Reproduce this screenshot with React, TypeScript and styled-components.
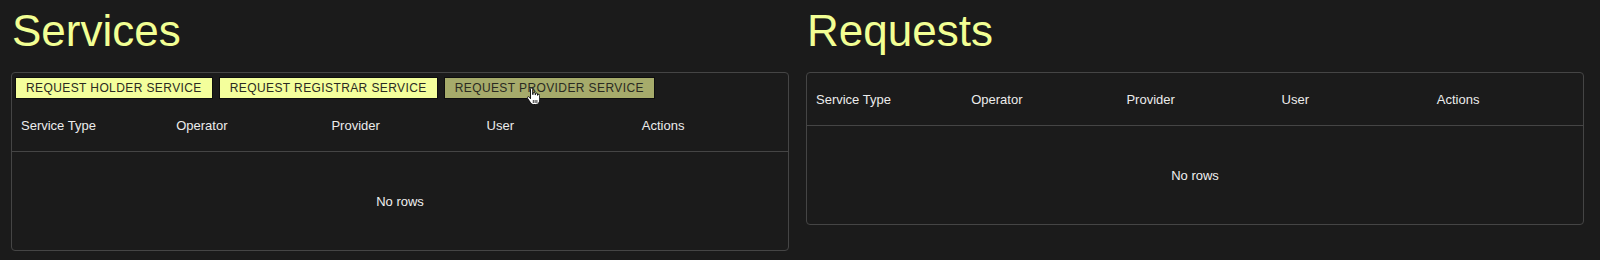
import React from 'react';
import styled, { createGlobalStyle } from 'styled-components';

const GlobalStyle = createGlobalStyle`
  html, body {
    margin: 0;
    padding: 0;
    background: #1b1b1b;
    font-family: "Liberation Sans", Arial, sans-serif;
  }
`;

const Page = styled.div`
  display: grid;
  grid-template-columns: 1fr 1fr;
  column-gap: 17px;
  padding: 0 16px 0 11px;
  height: 260px;
  box-sizing: border-box;
`;

const Column = styled.section`
  display: flex;
  flex-direction: column;
  min-width: 0;
`;

const Title = styled.h1`
  margin: 6px 0 17px 1px;
  font-size: 44px;
  font-weight: 400;
  line-height: 49px;
  color: #f2ff94;
`;

const Grid = styled.div`
  border: 1px solid #454545;
  border-radius: 4px;
  display: flex;
  flex-direction: column;
`;

const Toolbar = styled.div`
  display: flex;
  gap: 6px;
  padding: 4px 3px 0;
`;

const ToolButton = styled.button<{ $hover?: boolean }>`
  position: relative;
  height: 22px;
  padding: 0 10px;
  border: 1px solid #0e0e0e;
  border-radius: 0;
  background: ${(p) => (p.$hover ? '#a6ab6b' : '#f4ff9c')};
  color: #2a2a22;
  font-family: "Liberation Sans", Arial, sans-serif;
  font-size: 12px;
  letter-spacing: 0.4px;
  text-transform: uppercase;
  line-height: 20px;
  white-space: nowrap;
  cursor: pointer;
`;

const HeaderRow = styled.div`
  display: flex;
  height: 52px;
  align-items: center;
  border-bottom: 1px solid #454545;
`;

const HeaderCell = styled.div`
  flex: 1;
  padding-left: 9px;
  color: #ececec;
  font-size: 13px;
`;

const Empty = styled.div`
  height: 98px;
  display: flex;
  align-items: center;
  justify-content: center;
  color: #f0f0f0;
  font-size: 13px;
`;

const Pointer = styled.svg`
  position: absolute;
  left: 82px;
  top: 10px;
  width: 13px;
  height: 17px;
  pointer-events: none;
`;

const columns = ['Service Type', 'Operator', 'Provider', 'User', 'Actions'];

const HandCursor = () => (
  <Pointer viewBox="0 0 13 17">
    <path
      d="M3.5 1.2c0-.7.5-1.2 1.1-1.2s1.1.5 1.1 1.2v5.3h.4V5.3c0-.6.5-1 1-1s1 .4 1 1v1.4h.4V6c0-.6.5-1 1-1s1 .4 1 1v1.3h.3c0-.6.4-1 .9-1s1 .4 1 1V12c0 2.6-1.6 4.5-4 4.5H6.6c-1.3 0-2.2-.6-3-1.7L.6 10.4c-.4-.6-.3-1.2.2-1.5.5-.4 1.2-.2 1.6.3l1.1 1.5V1.2z"
      fill="#fff"
      stroke="#000"
      strokeWidth="0.9"
    />
    <path d="M6.3 12v3M8.1 12v3M9.9 12v3" stroke="#000" strokeWidth="0.8" />
  </Pointer>
);

const DataTable = ({ actions }: { actions?: boolean }) => (
  <Grid>
    {actions && (
      <Toolbar>
        <ToolButton>Request Holder Service</ToolButton>
        <ToolButton>Request Registrar Service</ToolButton>
        <ToolButton $hover>
          Request Provider Service
          <HandCursor />
        </ToolButton>
      </Toolbar>
    )}
    <HeaderRow>
      {columns.map((c) => (
        <HeaderCell key={c}>{c}</HeaderCell>
      ))}
    </HeaderRow>
    <Empty>No rows</Empty>
  </Grid>
);

export default function App() {
  return (
    <>
      <GlobalStyle />
      <Page>
        <Column>
          <Title>Services</Title>
          <DataTable actions />
        </Column>
        <Column>
          <Title>Requests</Title>
          <DataTable />
        </Column>
      </Page>
    </>
  );
}
